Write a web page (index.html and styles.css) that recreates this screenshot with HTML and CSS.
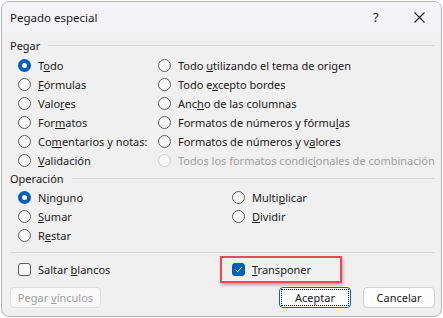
FILE: index.html
```html
<!DOCTYPE html>
<html lang="es">
<head>
    <meta charset="UTF-8">
    <title>Pegado especial</title>
    <link rel="stylesheet" href="styles.css">
</head>
<body>
    <div class="window">
        <div class="titlebar">
            <span class="title">Pegado especial</span>
            <span class="help">?</span>
            <span class="close">
                <svg width="11" height="11" viewBox="0 0 11 11"><path d="M0.5 0.5L10.5 10.5M10.5 0.5L0.5 10.5" stroke="#1a1a1a" stroke-width="1.1" fill="none"/></svg>
            </span>
        </div>
        <div class="content">
            <div class="legend"><span>Pegar</span><div class="line"></div></div>
            <div class="grid paste">
                <label class="opt"><span class="radio on"></span><span>T<u>o</u>do</span></label>
                <label class="opt"><span class="radio"></span><span>Todo <u>u</u>tilizando el tema de origen</span></label>
                <label class="opt"><span class="radio"></span><span><u>F</u>órmulas</span></label>
                <label class="opt"><span class="radio"></span><span>Todo e<u>x</u>cepto bordes</span></label>
                <label class="opt"><span class="radio"></span><span>Valo<u>r</u>es</span></label>
                <label class="opt"><span class="radio"></span><span>Anc<u>h</u>o de las columnas</span></label>
                <label class="opt"><span class="radio"></span><span>For<u>m</u>atos</span></label>
                <label class="opt"><span class="radio"></span><span>Formatos de números y fórmu<u>l</u>as</span></label>
                <label class="opt"><span class="radio"></span><span>Co<u>m</u>entarios y notas:</span></label>
                <label class="opt"><span class="radio"></span><span>Formatos de números y v<u>a</u>lores</span></label>
                <label class="opt"><span class="radio"></span><span><u>V</u>alidación</span></label>
                <label class="opt disabled"><span class="radio"></span><span>Todos los formatos condic<u>i</u>onales de combinación</span></label>
            </div>
            <div class="legend"><span>Operación</span><div class="line"></div></div>
            <div class="grid op">
                <label class="opt"><span class="radio on"></span><span>N<u>i</u>nguno</span></label>
                <label class="opt"><span class="radio"></span><span>Multi<u>p</u>licar</span></label>
                <label class="opt"><span class="radio"></span><span><u>S</u>umar</span></label>
                <label class="opt"><span class="radio"></span><span><u>D</u>ividir</span></label>
                <label class="opt"><span class="radio"></span><span>R<u>e</u>star</span></label>
            </div>
            <div class="sep"></div>
            <div class="checks">
                <label class="opt"><span class="check"></span><span>Saltar <u>b</u>lancos</span></label>
                <div class="mark">
                    <label class="opt"><span class="check on">
                        <svg width="9" height="9" viewBox="0 0 9 9"><path d="M1.5 4.8L3.6 6.8L7.6 2.4" stroke="#fff" stroke-width="1" fill="none"/></svg>
                    </span><span><u>T</u>ransponer</span></label>
                </div>
            </div>
            <div class="buttons">
                <button class="btn disabled">Pegar <u>v</u>ínculos</button>
                <div class="spacer"></div>
                <button class="btn default"><span class="focus">Aceptar</span></button>
                <button class="btn">Cancelar</button>
            </div>
        </div>
    </div>
</body>
</html>
```

FILE: styles.css
```css
body {
    margin: 0;
    background-color: #ffffff;
    font-family: "Noto Sans", "Open Sans", sans-serif;
    font-size: 11px;
    color: #1a1a1a;
}
.window {
    margin: 1px;
    width: 439px;
    height: 314px;
    border: 1px solid #b4b4b4;
    border-radius: 8px;
    background-color: #f0f0f0;
    overflow: hidden;
}
.titlebar {
    height: 30px;
    background-color: #f4f3f8;
    display: flex;
    align-items: center;
    padding-left: 8px;
}
.title {
    flex: 1;
    font-size: 11.5px;
}
.help {
    width: 8px;
    margin-right: 33px;
    font-size: 13px;
}
.close {
    width: 11px;
    display: flex;
    margin-right: 16px;
}
.content {
    padding: 5px 6px 0 8px;
}
.legend {
    display: flex;
    align-items: center;
    height: 16px;
}
.legend .line {
    flex: 1;
    border-top: 1px solid #d6d6d6;
    margin-left: 8px;
}
.grid {
    display: grid;
    padding-left: 8px;
}
.paste {
    grid-template-columns: 140px 1fr;
    margin-top: 3px;
}
.op {
    grid-template-columns: 214px 1fr;
    margin-top: 2px;
}
.opt {
    display: flex;
    align-items: center;
    height: 19px;
    gap: 7px;
    white-space: nowrap;
}
.opt.disabled {
    color: #9d9d9d;
}
.radio {
    width: 11px;
    height: 11px;
    border: 1px solid #5b5b5b;
    border-radius: 50%;
    background-color: #f7f7f7;
    flex-shrink: 0;
}
.radio.on {
    width: 5px;
    height: 5px;
    border: 4px solid #005fb8;
    background-color: #ffffff;
}
.disabled .radio {
    border-color: #cdcdcd;
}
.sep {
    border-top: 1px solid #d6d6d6;
    margin-top: 7px;
}
.checks {
    display: grid;
    grid-template-columns: 202px 1fr;
    padding-left: 8px;
    margin-top: 3px;
    align-items: center;
}
.check {
    width: 11px;
    height: 11px;
    border: 1px solid #5b5b5b;
    border-radius: 3px;
    background-color: #f7f7f7;
    flex-shrink: 0;
    display: flex;
    align-items: center;
    justify-content: center;
}
.check.on {
    border-color: #005fb8;
    background-color: #005fb8;
}
.mark {
    width: 108px;
    height: 23px;
    border: 2px solid #ec4a52;
    padding-left: 10px;
    display: flex;
    align-items: center;
    box-shadow: 1px 2px 3px rgba(0, 0, 0, 0.3);
}
.buttons {
    display: flex;
    margin-top: 4px;
    gap: 12px;
}
.spacer {
    flex: 1;
}
.btn {
    height: 21px;
    padding: 0;
    border: 1px solid #d0d0d0;
    border-radius: 4px;
    background-color: #fdfdfd;
    font-family: inherit;
    font-size: 11px;
    color: #1a1a1a;
    width: 72px;
}
.btn.disabled {
    width: 91px;
    color: #a0a0a0;
    background-color: #f9f9f9;
    border-color: #dedede;
}
.btn.default {
    border-color: #0067c0;
    padding: 1px;
}
.focus {
    display: block;
    height: 100%;
    box-sizing: border-box;
    border: 1px dotted #000;
    line-height: 15px;
}
```
